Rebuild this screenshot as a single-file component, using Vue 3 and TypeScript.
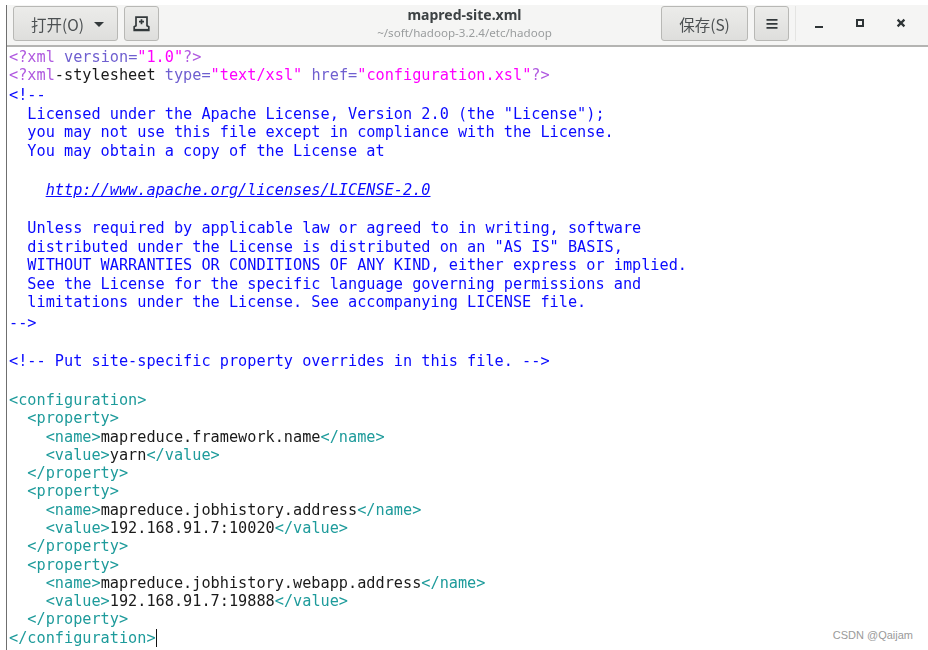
<script setup lang="ts">
type Seg = { t: string; c?: string };
const P = "pi", A = "at", V = "va", T = "tg", C = "cm";
const tag = (t: string): Seg => ({ t, c: T });
const cm = (t: string): Seg => ({ t, c: C });
const lines: Seg[][] = [
  [{ t: "<?xml", c: P }, { t: " " }, { t: 'version', c: A }, { t: "=", c: A }, { t: '"1.0"', c: V }, { t: "?>", c: P }],
  [{ t: "<?xml", c: P }, { t: "-stylesheet " }, { t: "type", c: A }, { t: "=", c: A }, { t: '"text/xsl"', c: V }, { t: " " }, { t: "href", c: A }, { t: "=", c: A }, { t: '"configuration.xsl"', c: V }, { t: "?>", c: P }],
  [cm("<!--")],
  [cm('  Licensed under the Apache License, Version 2.0 (the "License");')],
  [cm("  you may not use this file except in compliance with the License.")],
  [cm("  You may obtain a copy of the License at")],
  [],
  [cm("    "), { t: "http://www.apache.org/licenses/LICENSE-2.0", c: "lk" }],
  [],
  [cm("  Unless required by applicable law or agreed to in writing, software")],
  [cm('  distributed under the License is distributed on an "AS IS" BASIS,')],
  [cm("  WITHOUT WARRANTIES OR CONDITIONS OF ANY KIND, either express or implied.")],
  [cm("  See the License for the specific language governing permissions and")],
  [cm("  limitations under the License. See accompanying LICENSE file.")],
  [cm("-->")],
  [],
  [cm("<!-- Put site-specific property overrides in this file. -->")],
  [],
  [tag("<configuration>")],
  [tag("  <property>")],
  [tag("    <name>"), { t: "mapreduce.framework.name" }, tag("</name>")],
  [tag("    <value>"), { t: "yarn" }, tag("</value>")],
  [tag("  </property>")],
  [tag("  <property>")],
  [tag("    <name>"), { t: "mapreduce.jobhistory.address" }, tag("</name>")],
  [tag("    <value>"), { t: "192.168.91.7:10020" }, tag("</value>")],
  [tag("  </property>")],
  [tag("  <property>")],
  [tag("    <name>"), { t: "mapreduce.jobhistory.webapp.address" }, tag("</name>")],
  [tag("    <value>"), { t: "192.168.91.7:19888" }, tag("</value>")],
  [tag("  </property>")],
  [tag("</configuration>"), { t: "", c: "caret" }],
];
// The source's rows are not evenly spaced: each row's height, where it differs from the default.
const rowHeights: Record<number, number> = {
  1: 19.4, 2: 19.2, 4: 18.6, 5: 19.5, 6: 19.5, 7: 19.3, 8: 19.3, 9: 18.5, 10: 18.5, 11: 18.5, 13: 20.6, 14: 19.2, 15: 19.2, 16: 19.3, 17: 19.8,
};
const rowHeight = (i: number) => `${rowHeights[i] ?? 18.27}px`;
</script>

<template>
  <div class="shot">
    <div class="window">
      <header class="bar">
        <div class="group">
          <button class="btn open"><span>打开(O)</span><i class="arrow"></i></button>
          <button class="btn icon newdoc">
            <svg width="17" height="16" viewBox="0 0 17 16">
              <path d="M3 1.2h11v8.6l1.8 1V14.4H1.2V10.8L3 9.8z" fill="none" stroke="#33393b" stroke-width="1.7" />
              <path d="M8.5 3.2v5M6 5.7h5" fill="none" stroke="#33393b" stroke-width="1.7" />
              <path d="M1 13.6h15" stroke="#33393b" stroke-width="1.4" />
            </svg>
          </button>
        </div>
        <div class="title">
          <div class="name">mapred-site.xml</div>
          <div class="path">~/soft/hadoop-3.2.4/etc/hadoop</div>
        </div>
        <div class="group right">
          <button class="btn save">保存(S)</button>
          <button class="btn icon menu">
            <svg width="12" height="12" viewBox="0 0 12 12">
              <path d="M.5 1.8h11M.5 5.8h11M.5 9.8h11" stroke="#33393b" stroke-width="1.7" />
            </svg>
          </button>
          <div class="sep"></div>
          <div class="wm">
            <svg width="12" height="12" viewBox="0 0 12 12"><path d="M2 10h8" stroke="#2e3436" stroke-width="2" /></svg>
            <svg width="12" height="12" viewBox="0 0 12 12"><rect x="3" y="3" width="6" height="6" fill="none" stroke="#2e3436" stroke-width="2" /></svg>
            <svg width="12" height="12" viewBox="0 0 12 12"><path d="M2.6 2.6l6.8 6.8M9.4 2.6l-6.8 6.8" stroke="#2e3436" stroke-width="2.2" /></svg>
          </div>
        </div>
      </header>
      <main class="code">
        <div v-for="(line, i) in lines" :key="i" class="line" :style="{ height: rowHeight(i) }">
          <span v-for="(s, j) in line" :key="j" :class="s.c">{{ s.t }}</span>
        </div>
      </main>
    </div>
    <div class="mark">CSDN @Qaijam</div>
  </div>
</template>

<style>
html, body { margin: 0; background: #fff; }
</style>

<style scoped>
.shot {
  width: 928px;
  height: 650px;
  background: #fff;
  overflow: hidden;
  position: relative;
  padding: 5px 0 0 6px;
  box-sizing: border-box;
}
.window {
  height: 645px;
  border-left: 1px solid #6f6f6f;
  display: flex;
  flex-direction: column;
  filter: blur(0.35px);
}
.bar {
  height: 42px;
  flex: none;
  display: flex;
  align-items: flex-start;
  justify-content: space-between;
  padding: 1px 0 0 6px;
  box-sizing: border-box;
  background: #f5f5f4;
  border-bottom: 2px solid #b4b4b2;
  font-family: "Noto Sans CJK SC", "Noto Sans", sans-serif;
  color: #33393b;
  position: relative;
}
.group { display: flex; gap: 6px; align-items: flex-start; }
.btn {
  height: 35px;
  box-sizing: border-box;
  border: 1px solid #b8b8b5;
  border-radius: 3px;
  background: linear-gradient(#ececea, #dededc);
  font: 15.5px "Noto Sans CJK SC", "Noto Sans", sans-serif;
  color: #4c5052;
  padding: 0;
  display: flex;
  align-items: center;
  justify-content: center;
}
.open { width: 105px; gap: 10px; padding-left: 4px; }
.arrow {
  width: 0;
  height: 0;
  border: 5px solid transparent;
  border-top: 5px solid #33393b;
  border-bottom: 0;
  margin-top: 2px;
}
.icon { width: 35px; }
.title {
  position: absolute;
  left: 0;
  right: 0;
  top: 1px;
  text-align: center;
  pointer-events: none;
}
.name { font: 700 14px/18px "Noto Sans", sans-serif; color: #3d4244; margin-right: 6px; }
.path { font: 11.6px/17px "Noto Sans", sans-serif; color: #9a9d9e; margin-right: 6px; }
.save { width: 87px; }
.right { position: relative; }
.sep { width: 1px; height: 35px; background: #e4e4e2; }
.wm { width: 126px; display: flex; gap: 29px; padding: 11px 0 0 11px; box-sizing: border-box; }
.code {
  flex: 1;
  padding: 1px 0 0 2px;
  font: 15.22px/18.27px "DejaVu Sans Mono", monospace;
  color: #1a1a1a;
  white-space: pre;
  background: #fff;
}
.pi { color: #b05ae0; }
.at { color: #6f5fd0; }
.va { color: #ff00ff; }
.tg { color: #1e9b9b; }
.cm { color: #0a0aff; }
.lk { color: #0a0aff; font-style: italic; text-decoration: underline; }
.caret { border-left: 1px solid #111; }
.mark {
  position: absolute;
  right: 15px;
  bottom: 9px;
  font: 11px "Liberation Sans", sans-serif;
  color: #9a9a9a;
}
</style>
